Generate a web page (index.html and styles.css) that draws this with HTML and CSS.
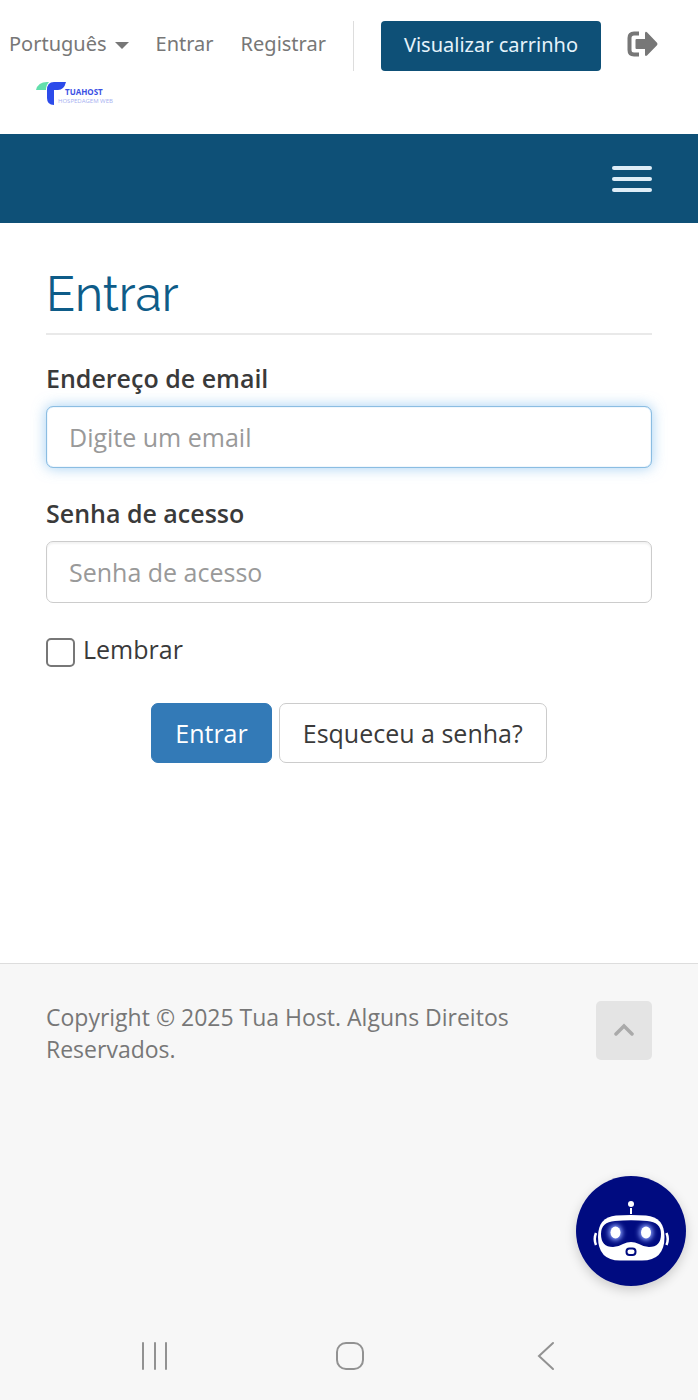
FILE: index.html
```html
<!DOCTYPE html>
<html lang="pt">
<head>
<meta charset="utf-8">
<meta name="viewport" content="width=device-width, initial-scale=1">
<title>Entrar - Tua Host</title>
<link rel="stylesheet" href="styles.css">
</head>
<body>
<header class="header">
  <nav class="top-nav" aria-label="Conta">
    <button class="top-link language" type="button">Português <span class="caret"></span></button>
    <a class="top-link" href="#login">Entrar</a>
    <a class="top-link" href="#register">Registrar</a>
    <span class="divider"></span>
    <a class="cart-button" href="#cart">Visualizar carrinho</a>
    <a class="logout" href="#logout" aria-label="Sair">
      <svg width="31" height="26" viewBox="0 0 31 26"><path d="M12 2.500H7Q2.500 2.500 2.500 7V19Q2.500 23.500 7 23.500H12" fill="none" stroke="currentColor" stroke-width="4"/><path d="M8.500 9Q8.500 8 9.500 8H18V2Q18.500 0 20 1.200L30 11.800Q31 13 30 14.200L20 24.500Q18.500 25.500 18 24V18H9.500Q8.500 18 8.500 17Z" fill="currentColor"/></svg>
    </a>
  </nav>
  <a class="logo" href="#home" aria-label="Tua Host">
    <svg width="80" height="26" viewBox="0 0 80 26">
      <path d="M0 9Q2 1 11 1H13Q10 4 10 9Z" fill="#62dfac"/>
      <path d="M11 9Q11 1 18 1H30Q28 9 22 9H18V24Q11 24 11 17Z" fill="#2c4bea"/>
      <text class="logo-name" x="29" y="14">TUAHOST</text>
      <text class="logo-tagline" x="22" y="22">HOSPEDAGEM WEB</text>
    </svg>
  </a>
</header>
<div class="menu-bar">
  <button class="menu-button" type="button" aria-label="Menu"><span></span><span></span><span></span></button>
</div>
<main class="content">
  <h1 class="title">Entrar</h1>
  <form class="login-form">
    <div class="field">
      <label for="email">Endereço de email</label>
      <input class="input input-active" id="email" type="email" placeholder="Digite um email">
    </div>
    <div class="field">
      <label for="password">Senha de acesso</label>
      <input class="input" id="password" type="password" placeholder="Senha de acesso">
    </div>
    <div class="remember">
      <input id="remember" type="checkbox">
      <label for="remember">Lembrar</label>
    </div>
    <div class="actions">
      <button class="button primary" type="submit">Entrar</button>
      <a class="button" href="#reset">Esqueceu a senha?</a>
    </div>
  </form>
</main>
<footer class="footer">
  <p class="copyright">Copyright © 2025 Tua Host. Alguns Direitos Reservados.</p>
  <a class="to-top" href="#top" aria-label="Voltar ao topo">
    <svg width="20" height="16" viewBox="0 0 20 16"><path d="M2 11L10 3L18 11" fill="none" stroke="currentColor" stroke-width="3.500" stroke-linecap="round"/></svg>
  </a>
</footer>
<button class="chat" type="button" aria-label="Assistente virtual">
  <svg viewBox="0 0 110 110">
    <defs><filter id="glow" x="-1" y="-1" width="3" height="3"><feGaussianBlur stdDeviation="2.500"/></filter></defs>
    <circle cx="55" cy="28" r="3" fill="#fff"/>
    <path d="M55 32V38" stroke="#fff" stroke-width="2"/>
    <path d="M20 57Q17.500 63 20 69M90.500 57Q93 63 90.500 69" fill="none" stroke="#fff" stroke-width="2.500"/>
    <path d="M40 39.500Q55 38.500 70 39.500Q88.500 41 88.500 61Q88.500 84.500 66 84.500H44Q22 84.500 22 61Q22 41 40 39.500Z" fill="#fff"/>
    <path d="M39 45Q55 43.500 71 45Q85 46 85 58Q85 71 73 71Q68 71 63 68Q55 64 47 68Q42 71 37 71Q25 71 25 58Q25 46 39 45Z" fill="#000b80"/>
    <ellipse cx="39.500" cy="56.500" rx="7" ry="8" fill="#8ca2ff" filter="url(#glow)"/>
    <ellipse cx="70" cy="56.500" rx="7" ry="8" fill="#8ca2ff" filter="url(#glow)"/>
    <ellipse cx="39.500" cy="56.500" rx="5" ry="6" fill="#fff"/>
    <ellipse cx="70" cy="56.500" rx="5" ry="6" fill="#fff"/>
    <rect x="50.500" y="72.500" width="9" height="6.500" rx="3" fill="#fff" stroke="#000b80" stroke-width="2"/>
  </svg>
</button>
<nav class="system-nav" aria-label="Sistema">
  <button type="button" aria-label="Recentes"><svg width="30" height="30" viewBox="0 0 30 30"><path d="M4 2V28M16 2V28M27 2V28"/></svg></button>
  <button type="button" aria-label="Início"><svg width="30" height="30" viewBox="0 0 30 30"><rect x="3" y="2" width="26" height="26" rx="9"/></svg></button>
  <button type="button" aria-label="Voltar"><svg width="30" height="30" viewBox="0 0 30 30"><path d="M24 2L10 15L24 28"/></svg></button>
</nav>
</body>
</html>
```
FILE: styles.css
```css
* { box-sizing: border-box; }

body {
  display: flex;
  flex-direction: column;
  min-height: 100vh;
  margin: 0;
  background: #f7f7f7;
  color: #3a3a3a;
  font-family: "Open Sans", "Noto Sans", sans-serif;
  font-size: 25px;
}

a { color: inherit; text-decoration: none; }
button { margin: 0; padding: 0; border: 0; background: none; color: inherit; font: inherit; cursor: pointer; }
svg { display: block; }

.header { padding: 21px 0 27px; background: #fff; }

.top-nav {
  display: flex;
  align-items: center;
  height: 50px;
  padding-left: 9px;
  color: #777;
  font-family: "Noto Sans", "Open Sans", sans-serif;
  font-size: 20px;
  white-space: nowrap;
}

.top-link { margin-right: 27px; padding-bottom: 5px; }
.language { display: flex; align-items: center; gap: 8px; }
.caret { margin-top: 3px; border: 7px solid transparent; border-top-color: currentColor; border-bottom: 0; }
.divider { align-self: stretch; width: 1px; margin-right: 27px; background: #ddd; }

.cart-button {
  padding: 0 23px 2px;
  border-radius: 4px;
  background: #0e5077;
  color: #e5f3fb;
  line-height: 48px;
}

.logout { margin-left: 26px; padding-bottom: 4px; }
.logo { display: block; width: 80px; margin: 10px 0 0 36px; }
.logo-name { fill: #3a50e4; font: bold 8px "Open Sans", sans-serif; }
.logo-tagline { fill: #a6aff1; font: 6px "Open Sans", sans-serif; }

.menu-bar {
  display: flex;
  justify-content: flex-end;
  align-items: center;
  height: 89px;
  padding: 0 46px;
  background: #0e5077;
}

.menu-button { display: grid; gap: 7px; width: 40px; }
.menu-button span { height: 4px; border-radius: 2px; background: #deedf7; }

.content { padding: 41px 46px 200px; border-bottom: 1px solid #ddd; background: #fff; }

.title {
  margin: 0 0 26px;
  padding-bottom: 8px;
  border-bottom: 2px solid #e9e9e9;
  color: #0e5c88;
  font-family: Raleway, Lato, "Open Sans", sans-serif;
  font-size: 48px;
  font-weight: 400;
  line-height: 61px;
}

.field { margin-bottom: 28px; }
.field label { display: block; margin-bottom: 11px; font-weight: 600; line-height: 34px; }

.input {
  display: block;
  width: 100%;
  height: 62px;
  padding: 0 22px;
  border: 1px solid #ccc;
  border-radius: 7px;
  outline: 0;
  background: #fff;
  box-shadow: inset 0 2px 2px #0000000d;
  color: #555;
  font: inherit;
}

.input::placeholder { color: #999; opacity: 1; }
.input-active { border-color: #8bbde2; box-shadow: inset 0 0 1px #66afe9, 0 0 14px #66afe999; }

.remember { display: flex; align-items: center; gap: 8px; line-height: 36px; }

.remember input {
  appearance: none;
  width: 29px;
  height: 29px;
  margin: 4px 0 0;
  border: 2px solid #777;
  border-radius: 5px;
  background: #fff;
}

.remember label { padding-bottom: 2px; }
.actions { display: flex; justify-content: center; gap: 7px; margin-top: 34px; }

.button {
  padding: 0 23px;
  border: 1px solid #ccc;
  border-radius: 7px;
  line-height: 58px;
}

.primary { border-color: #337ab7; background: #337ab7; color: #fff; }

.footer {
  display: flex;
  flex: 1;
  justify-content: space-between;
  align-items: flex-start;
  gap: 60px;
  padding: 37px 46px;
  color: #777;
}

.copyright { margin: 0; font-size: 23px; line-height: 32px; }

.to-top {
  display: grid;
  flex: none;
  place-items: center;
  width: 56px;
  height: 59px;
  border-radius: 5px;
  background: #e4e4e4;
  color: #aaa;
}

.chat {
  position: fixed;
  right: 12px;
  bottom: 114px;
  width: 110px;
  height: 110px;
  border-radius: 50%;
  background: #000b80;
  box-shadow: 0 4px 12px #0000002e;
}

.system-nav { display: flex; justify-content: space-around; padding: 29px 56px; }
.system-nav svg { fill: none; stroke: #929292; stroke-width: 2; stroke-linecap: round; }
```
